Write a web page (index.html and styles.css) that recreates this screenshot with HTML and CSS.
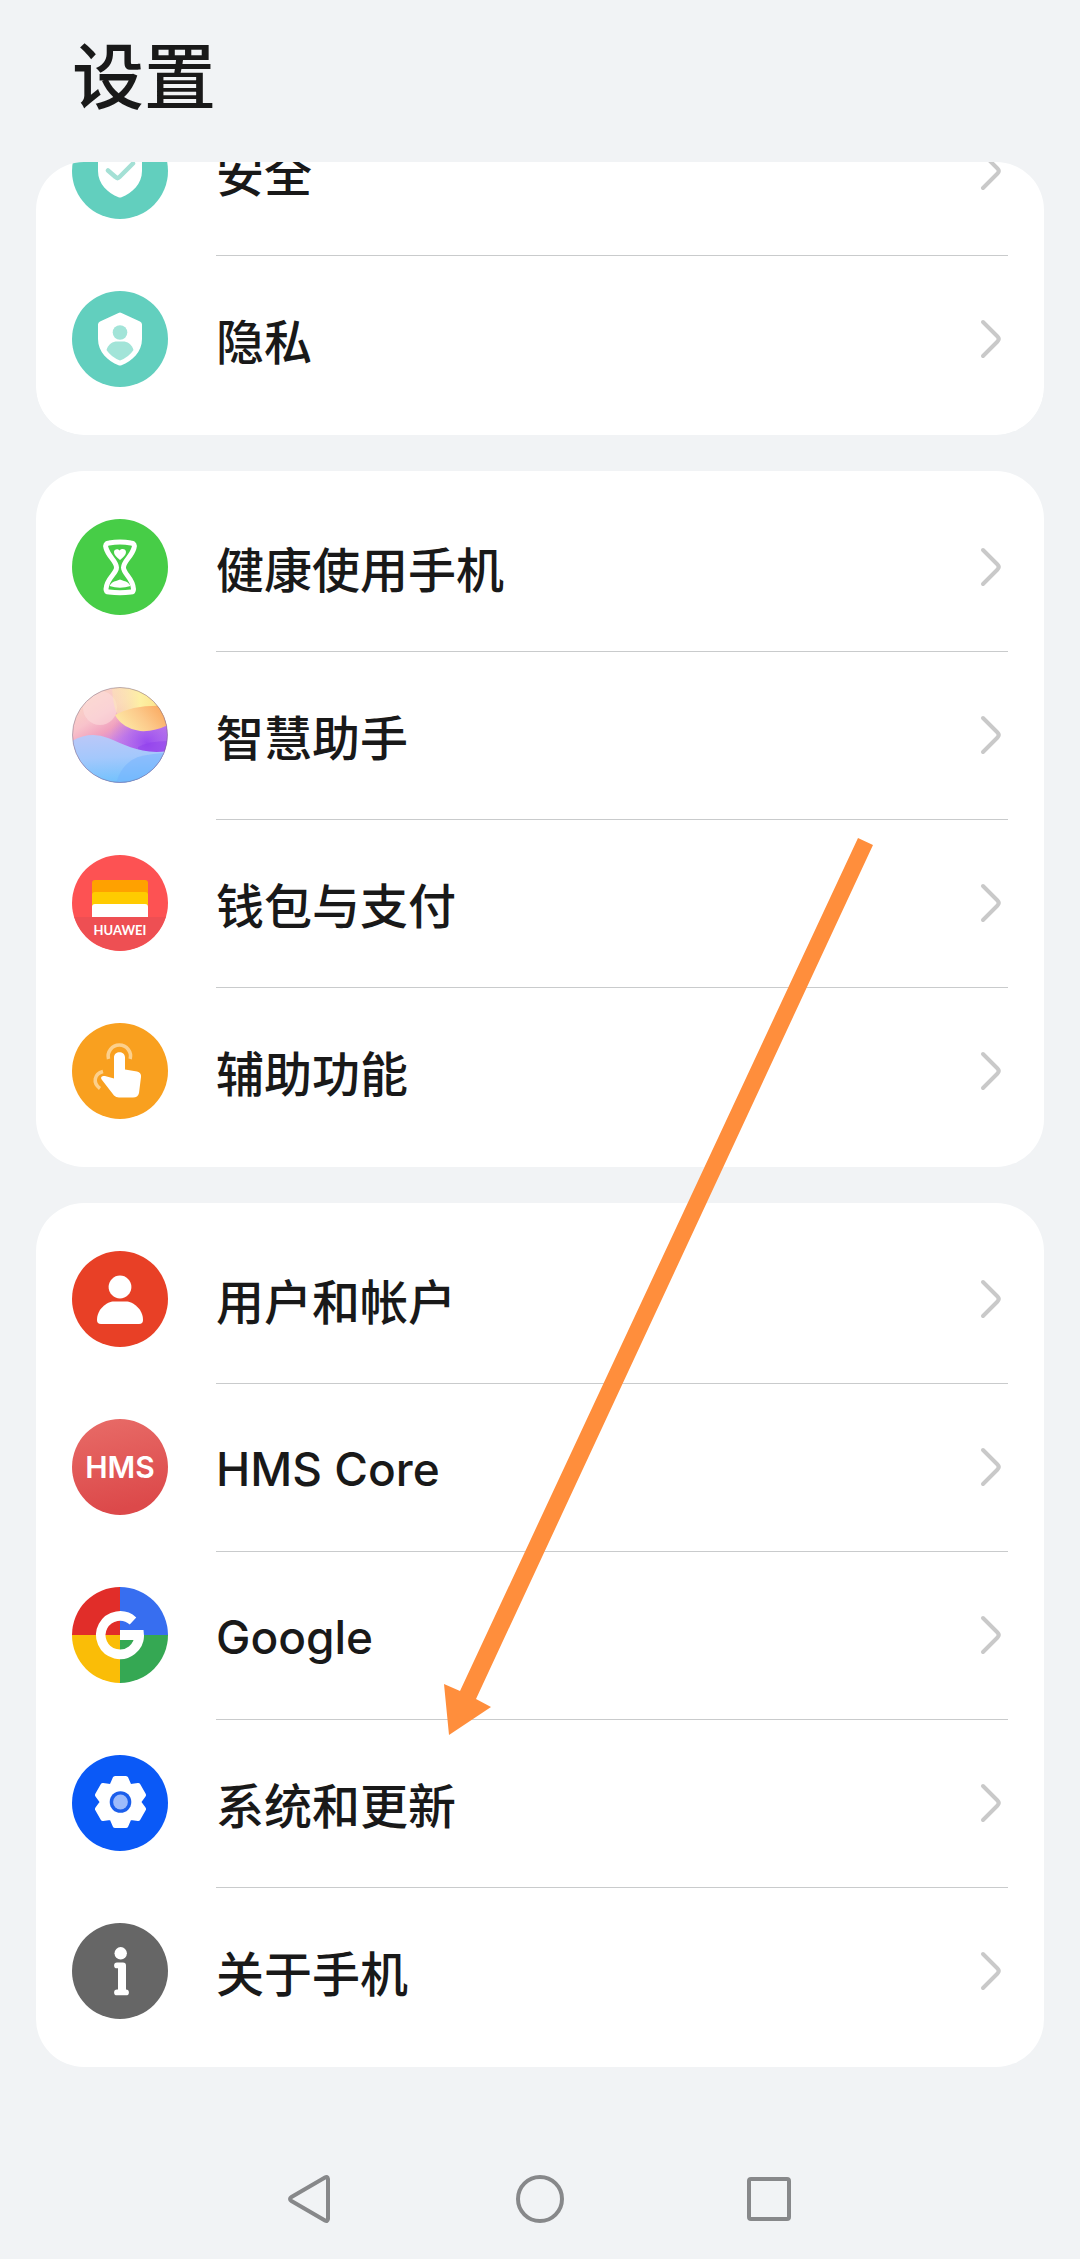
FILE: index.html
```html
<!DOCTYPE html>
<html lang="zh-CN">
<head>
<meta charset="utf-8">
<meta name="viewport" content="width=device-width, initial-scale=1">
<title>设置</title>
<link rel="stylesheet" href="styles.css">
</head>
<body>
<svg class="defs" aria-hidden="true">
  <symbol id="chevron" viewBox="0 0 36 48"><path d="M11 7 25.500 21.500Q28 24 25.500 26.500L11 41" fill="none" stroke="#c9c9c9" stroke-width="4" stroke-linecap="round"/></symbol>
  <symbol id="shield" viewBox="0 0 96 96"><path d="M46.500 22Q48 21.200 49.500 22L68 30.500Q70 31.500 70 33.500V48C70 61 60 70 49.500 74.200Q48 74.800 46.500 74.200C36 70 26 61 26 48V33.500Q26 31.500 28 30.500Z" fill="#fff"/></symbol>
</svg>

<header class="header"><h1 class="title">设置</h1></header>

<main class="groups">
  <section class="scrolled">
    <nav class="card">
      <a class="row" href="#security">
        <svg class="icon" viewBox="0 0 96 96" aria-hidden="true"><circle cx="48" cy="48" r="48" fill="#62cfbe"/><use href="#shield"/><path d="M36 47.500 43.500 54Q45.500 56 47.500 54L61 40.500" fill="none" stroke="#a4e0d5" stroke-width="4.500" stroke-linecap="round"/></svg>
        <span class="body"><span class="label">安全</span><svg class="chevron" aria-hidden="true"><use href="#chevron"/></svg></span>
      </a>
      <a class="row" href="#privacy">
        <svg class="icon" viewBox="0 0 96 96" aria-hidden="true"><circle cx="48" cy="48" r="48" fill="#62cfbe"/><use href="#shield"/><circle cx="48" cy="41.500" r="7.300" fill="#a2e4d8"/><path d="M34.500 59C36 53 41 50.500 45 50.500H51C55 50.500 60 53 61.500 59Q57 66 48 69.500 39 66 34.500 59Z" fill="#a2e4d8"/></svg>
        <span class="body"><span class="label">隐私</span><svg class="chevron" aria-hidden="true"><use href="#chevron"/></svg></span>
      </a>
    </nav>
  </section>

  <nav class="card">
    <a class="row" href="#digital-balance">
      <svg class="icon" viewBox="0 0 96 96" aria-hidden="true"><circle cx="48" cy="48" r="48" fill="#47cd47"/><path d="M37 24Q48 22 59 24Q63.500 24.500 62 29C59.500 38 51.500 42 51.500 48.500C51.500 55 61 59 61.500 70Q61.500 73 59 73Q48 74.500 37 73Q34 73 34 70C34.500 59 44.500 55 44.500 48.500C44.500 42 36.500 38 34 29Q32.500 24.500 37 24Z" fill="none" stroke="#fff" stroke-width="5"/><path d="M48 41C44 38 42 35.500 42 33C42 30 46 29.500 47.500 31.500C50 29 54 30 54 33C54 35.500 52 38 48 41ZM37.500 67Q40 62.500 44 62L48 60.500L52 62Q56 62.500 58.500 67Q48 70.500 37.500 67Z" fill="#fff"/></svg>
      <span class="body"><span class="label">健康使用手机</span><svg class="chevron" aria-hidden="true"><use href="#chevron"/></svg></span>
    </a>
    <a class="row" href="#assistant">
      <svg class="icon" viewBox="0 0 96 96" aria-hidden="true">
        <defs>
          <clipPath id="orb"><circle cx="48" cy="48" r="47.500"/></clipPath>
          <linearGradient id="orbBase" x1=".1" y1="0" x2=".7" y2="1"><stop offset="0" stop-color="#fbdcc0"/><stop offset=".3" stop-color="#f8c3cb"/><stop offset=".45" stop-color="#f0a0be"/><stop offset=".58" stop-color="#cb84e6"/><stop offset="1" stop-color="#9a5cf2"/></linearGradient>
          <linearGradient id="orbSun" x1="0" y1="0" x2="1" y2="0"><stop offset="0" stop-color="#fdebb0" stop-opacity=".4"/><stop offset=".5" stop-color="#fdf0a4"/><stop offset="1" stop-color="#fbdc80"/></linearGradient>
          <linearGradient id="orbDune" x1="0" y1=".6" x2="1" y2=".2"><stop offset="0" stop-color="#fdeaa6"/><stop offset=".5" stop-color="#fcc98a"/><stop offset="1" stop-color="#faa65c"/></linearGradient>
          <linearGradient id="orbSea" x1="0" y1="0" x2=".1" y2="1"><stop offset="0" stop-color="#bcc8f8"/><stop offset=".5" stop-color="#a4c8fc"/><stop offset="1" stop-color="#74c2fd"/></linearGradient>
          <radialGradient id="orbViolet" cx=".78" cy=".58" r=".4"><stop offset="0" stop-color="#9a4cf0"/><stop offset="1" stop-color="#b070ec" stop-opacity="0"/></radialGradient>
        </defs>
        <g clip-path="url(#orb)">
          <path d="M0 0H96V96H0Z" fill="url(#orbBase)"/>
          <path d="M0 0H96V96H0Z" fill="url(#orbViolet)"/>
          <circle cx="28" cy="21" r="17" fill="#fcdcdc" opacity=".6"/>
          <path d="M40 0H96V30L50 34Q41 26 40 0Z" fill="url(#orbSun)"/>
          <path d="M43 28Q62 17 96 19V38Q82 45 68 44Q50 41 43 28Z" fill="url(#orbDune)"/>
          <path d="M66 60Q76 54 96 54V68H66Z" fill="#8735ec" opacity=".35"/>
          <path d="M0 54Q18 44 36 51C54 58 70 68 96 64V96H0Z" fill="url(#orbSea)"/>
          <path d="M44 96Q50 76 66 70Q82 66 96 66V96Z" fill="#74b2fd" opacity=".5"/>
        </g>
        <circle cx="48" cy="48" r="47.500" fill="none" stroke="#6f5f78" stroke-opacity=".45"/>
      </svg>
      <span class="body"><span class="label">智慧助手</span><svg class="chevron" aria-hidden="true"><use href="#chevron"/></svg></span>
    </a>
    <a class="row" href="#wallet">
      <svg class="icon" viewBox="0 0 96 96" aria-hidden="true"><circle cx="48" cy="48" r="48" fill="#fd5253"/><path d="M2.200 62H93.800A48 48 0 0 1 2.200 62Z" fill="#ee4f53"/><path d="M20 62V28Q20 25 23 25H73Q76 25 76 28V62Z" fill="#ffa100"/><path d="M20 62V40Q20 37 23 37H73Q76 37 76 40V62Z" fill="#ffcb00"/><path d="M20 62V52Q20 49 23 49H73Q76 49 76 52V62Z" fill="#fff"/><text class="icon-text brand-text" x="48" y="80" font-size="13">HUAWEI</text></svg>
      <span class="body"><span class="label">钱包与支付</span><svg class="chevron" aria-hidden="true"><use href="#chevron"/></svg></span>
    </a>
    <a class="row" href="#accessibility">
      <svg class="icon" viewBox="0 0 96 96" aria-hidden="true"><circle cx="48" cy="48" r="48" fill="#f9a01f"/><path d="M42 34.500C42 27.500 53 27.500 53 34.500V46.500L65 48.500Q69.500 49.500 69 54L67 70Q66 74.500 61 74.500H47Q44 74.500 42 72.500L30 57C27.500 53.500 31 52.500 33 53L42 55.500Z" fill="#fff"/><g fill="none" stroke="#fcd08c" stroke-width="3.500"><path d="M36.500 36A11.200 11.200 0 1 1 58.200 36"/><path d="M31 48.500C22 51 20.500 60 28 65.500"/></g></svg>
      <span class="body"><span class="label">辅助功能</span><svg class="chevron" aria-hidden="true"><use href="#chevron"/></svg></span>
    </a>
  </nav>

  <nav class="card">
    <a class="row" href="#accounts">
      <svg class="icon" viewBox="0 0 96 96" aria-hidden="true"><circle cx="48" cy="48" r="48" fill="#e84026"/><circle cx="48" cy="36" r="11.400" fill="#fff"/><path d="M25 69C25 58 35 50.500 42 50.500H54C61 50.500 71 58 71 69Q71 73 67 73H29Q25 73 25 69Z" fill="#fff"/></svg>
      <span class="body"><span class="label">用户和帐户</span><svg class="chevron" aria-hidden="true"><use href="#chevron"/></svg></span>
    </a>
    <a class="row" href="#hms">
      <svg class="icon" viewBox="0 0 96 96" aria-hidden="true"><defs><linearGradient id="hms" x1="0" y1="0" x2=".2" y2="1"><stop offset="0" stop-color="#e86c68"/><stop offset="1" stop-color="#dc494a"/></linearGradient></defs><circle cx="48" cy="48" r="48" fill="url(#hms)"/><text class="icon-text" x="48" y="59" font-size="30">HMS</text></svg>
      <span class="body"><span class="label latin">HMS Core</span><svg class="chevron" aria-hidden="true"><use href="#chevron"/></svg></span>
    </a>
    <a class="row" href="#google">
      <svg class="icon" viewBox="0 0 96 96" aria-hidden="true"><path d="M48 48H0A48 48 0 0 1 48 0Z" fill="#e12d29"/><path d="M48 48V0A48 48 0 0 1 96 48Z" fill="#376ef0"/><path d="M48 48H96A48 48 0 0 1 48 96Z" fill="#35a853"/><path d="M48 48V96A48 48 0 0 1 0 48Z" fill="#fabd07"/><path d="M61 34A19.200 19.200 0 1 0 67.200 48" fill="none" stroke="#fff" stroke-width="9.600"/><path d="M48 43H71.500Q72.500 48 71.200 53H48Z" fill="#fff"/></svg>
      <span class="body"><span class="label latin">Google</span><svg class="chevron" aria-hidden="true"><use href="#chevron"/></svg></span>
    </a>
    <a class="row" href="#system">
      <svg class="icon" viewBox="0 0 96 96" aria-hidden="true"><circle cx="48" cy="48" r="48" fill="#0a59f7"/><g transform="translate(48.500 47)"><path d="M5.400-23.400L8.200-16.900Q9-15.500 10.500-15.600L17.600-16.400L23-7L18.800-1.300Q18 0 18.800 1.300L23 7L17.600 16.400L10.500 15.600Q9 15.500 8.200 16.900L5.400 23.400H-5.400L-8.200 16.900Q-9 15.500-10.500 15.600L-17.600 16.400L-23 7L-18.800 1.300Q-18 0-18.800-1.300L-23-7L-17.600-16.400L-10.500-15.600Q-9-15.500-8.200-16.900L-5.400-23.400Z" fill="#fff" stroke="#fff" stroke-width="5" stroke-linejoin="round"/><circle r="10.800" fill="#1b5eeb"/><circle r="7.400" fill="#9dbbfb"/></g></svg>
      <span class="body"><span class="label">系统和更新</span><svg class="chevron" aria-hidden="true"><use href="#chevron"/></svg></span>
    </a>
    <a class="row" href="#about">
      <svg class="icon" viewBox="0 0 96 96" aria-hidden="true"><circle cx="48" cy="48" r="48" fill="#666"/><circle cx="48.700" cy="30.300" r="6.200" fill="#fff"/><path d="M45 39.500H51Q54 39.500 54 42.500V66.500A2.900 2.900 0 0 1 54 72.300H45A2.900 2.900 0 0 1 45 66.500H46V45.300H45A2.900 2.900 0 0 1 45 39.500Z" fill="#fff"/></svg>
      <span class="body"><span class="label">关于手机</span><svg class="chevron" aria-hidden="true"><use href="#chevron"/></svg></span>
    </a>
  </nav>

  <svg class="arrow" viewBox="0 0 432 900" aria-hidden="true"><path d="M414 2 429 9 32 863 47 871 5 899 0 848 16 855Z" fill="#ff8e3c"/></svg>
</main>

<footer class="navbar">
  <button class="key" type="button" aria-label="返回"><svg viewBox="0 0 96 96"><path d="M66 28V68Q65.500 71 63 69.500L29.500 50Q26.500 48 29.500 46L63 26.500Q65.500 25 66 28Z"/></svg></button>
  <button class="key" type="button" aria-label="主屏幕"><svg viewBox="0 0 96 96"><circle cx="48" cy="48" r="22"/></svg></button>
  <button class="key" type="button" aria-label="最近任务"><svg viewBox="0 0 96 96"><rect x="27" y="28" width="40" height="40" rx="2"/></svg></button>
</footer>
</body>
</html>
```
FILE: styles.css
```css
* {
  box-sizing: border-box;
}

body {
  display: flex;
  flex-direction: column;
  min-height: 100vh;
  margin: 0;
  background: #f1f3f5;
  color: #191919;
  font-family: "Noto Sans CJK SC", sans-serif;
}

.defs {
  display: none;
}

.header {
  padding: 24px 72px 42px;
}

.title {
  margin: 0;
  font-size: 72px;
  font-weight: 500;
  line-height: 96px;
}

.groups {
  position: relative;
  display: flex;
  flex-direction: column;
  gap: 36px;
  padding: 0 36px;
}

/* The first group is partly scrolled under the header. */
.scrolled {
  display: flex;
  flex-direction: column;
  justify-content: flex-end;
  height: 273px;
  overflow: hidden;
  border-radius: 48px;
}

.card {
  flex: none;
  padding: 12px 36px;
  border-radius: 48px;
  background: #fff;
}

.row {
  display: flex;
  gap: 48px;
  align-items: center;
  height: 168px;
  color: inherit;
  text-decoration: none;
}

.icon {
  flex: none;
  width: 96px;
  height: 96px;
}

.icon-text {
  fill: #fff;
  font-family: Inter, sans-serif;
  font-weight: 600;
  text-anchor: middle;
}

.brand-text {
  font-family: Lato, sans-serif;
  font-weight: 700;
}

.body {
  display: flex;
  flex: 1;
  align-items: center;
  justify-content: space-between;
  height: 100%;
}

.row + .row .body {
  box-shadow: inset 0 1px #c9cbcc;
}

.label {
  font-size: 48px;
  font-weight: 500;
  line-height: 72px;
}

.latin {
  padding-top: 4px;
  font-family: Inter, sans-serif;
  font-size: 46px;
}

.chevron {
  flex: none;
  width: 36px;
  height: 48px;
}

.arrow {
  position: absolute;
  top: 674px;
  left: 444px;
  width: 432px;
  height: 900px;
  pointer-events: none;
}

.navbar {
  display: flex;
  gap: 134px;
  justify-content: center;
  margin-top: auto;
  padding: 48px 0 12px;
}

.key {
  width: 96px;
  height: 96px;
  padding: 0;
  border: 0;
  background: none;
}

.key svg {
  display: block;
  fill: none;
  stroke: #87888a;
  stroke-width: 4;
}
```
